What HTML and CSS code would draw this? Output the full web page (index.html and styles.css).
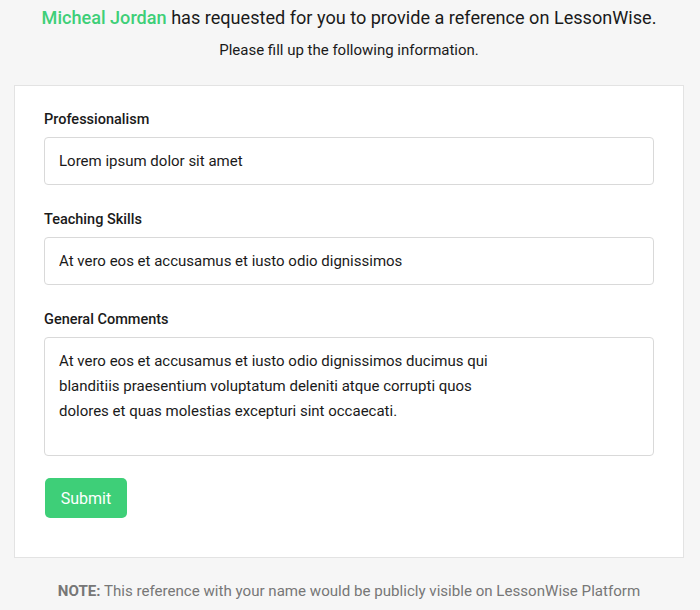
FILE: index.html
```html
<!DOCTYPE html>
<html lang="en">
<head>
    <meta charset="UTF-8">
    <meta name="viewport" content="width=device-width, initial-scale=1.0">
    <title>Reference - LessonWise</title>
    <link rel="stylesheet" href="styles.css">
</head>
<body>

    <div class="header">
        <h1><span class="name">Micheal Jordan</span> has requested for you to provide a reference on LessonWise.</h1>
        <p class="sub">Please fill up the following information.</p>
    </div>

    <form class="card" onsubmit="return false;">
        <div class="field">
            <label for="prof">Professionalism</label>
            <input id="prof" type="text" value="Lorem ipsum dolor sit amet">
        </div>
        <div class="field">
            <label for="teach">Teaching Skills</label>
            <input id="teach" type="text" value="At vero eos et accusamus et iusto odio dignissimos">
        </div>
        <div class="field">
            <label for="comments">General Comments</label>
            <textarea id="comments">At vero eos et accusamus et iusto odio dignissimos ducimus qui
blanditiis praesentium voluptatum deleniti atque corrupti quos
dolores et quas molestias excepturi sint occaecati.</textarea>
        </div>
        <button class="btn" type="submit">Submit</button>
    </form>

    <p class="note"><b>NOTE:</b> This reference with your name would be publicly visible on LessonWise Platform</p>

</body>
</html>
```

FILE: styles.css
```css
body {
    font-family: Roboto, "Liberation Sans", sans-serif;
    background-color: #f6f6f6;
    margin: 0;
    padding: 0 16px 0 14px;
    color: #1a1a1a;
}
.header {
    text-align: center;
    padding-top: 7px;
}
h1 {
    font-size: 18.1px;
    font-weight: 400;
    margin: 0;
    line-height: 22px;
}
.name {
    color: #3ecf78;
    font-weight: 500;
}
.sub {
    font-size: 15px;
    margin: 11px 0 0;
    line-height: 20px;
}
.card {
    background-color: white;
    border: 1px solid #e3e3e3;
    margin-top: 25px;
    padding: 26px 29px 39px;
}
.field {
    margin-bottom: 27px;
}
.field label {
    display: block;
    font-size: 14.5px;
    font-weight: 500;
    line-height: 16px;
    margin-bottom: 9px;
}
input, textarea {
    display: block;
    box-sizing: border-box;
    width: 100%;
    font-family: inherit;
    font-size: 15px;
    color: #1a1a1a;
    border: 1px solid #d9d9d9;
    border-radius: 4px;
    padding: 0 14px;
    outline: none;
}
input {
    height: 48px;
}
textarea {
    height: 119px;
    padding-top: 11px;
    line-height: 25px;
    resize: none;
}
.field:last-of-type {
    margin-bottom: 22px;
}
.btn {
    background-color: #3ecf78;
    color: white;
    font-family: inherit;
    font-size: 16px;
    border: none;
    border-radius: 5px;
    width: 82px;
    height: 40px;
    margin-left: 1px;
    cursor: pointer;
}
.note {
    text-align: center;
    color: #777;
    font-size: 15.1px;
    line-height: 18px;
    margin: 24px 0 0;
}
.note b {
    font-weight: 700;
}
```
